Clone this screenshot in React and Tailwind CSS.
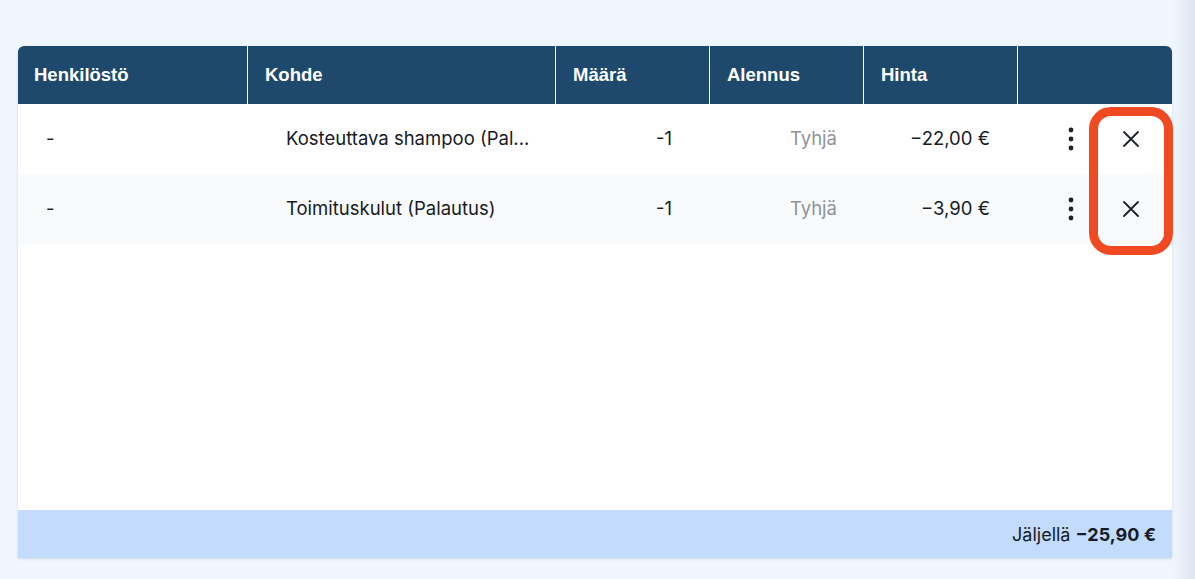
import React from "react";

const cols = "grid-cols-[230px_308px_154px_154px_154px_154px]";

function Dots() {
  return (
    <svg width="6" height="24" viewBox="0 0 6 24" className="block">
      <circle cx="3" cy="3" r="2.4" fill="#1a202c" />
      <circle cx="3" cy="12" r="2.4" fill="#1a202c" />
      <circle cx="3" cy="21" r="2.4" fill="#1a202c" />
    </svg>
  );
}

function XIcon() {
  return (
    <svg width="18" height="18" viewBox="0 0 18 18" className="block">
      <path d="M2 2 L16 16 M16 2 L2 16" stroke="#1a202c" strokeWidth="1.8" strokeLinecap="round" />
    </svg>
  );
}

function Row({ name, item, qty, price, alt }) {
  return (
    <div
      className={`grid ${cols} items-center h-[70px] text-[18.5px] text-[#161b26] ${alt ? "bg-[#f8fafc]" : "bg-white"}`}
      style={{ fontFamily: "Inter, 'Noto Sans', sans-serif" }}
    >
      <div className="pl-[28px]">{name}</div>
      <div className="pl-[38px] whitespace-nowrap overflow-hidden">{item}</div>
      <div className="text-right pr-[38px]">{qty}</div>
      <div className="text-right pr-[27px] text-[#8e9299]">Tyhjä</div>
      <div className="text-right pr-[28px]">{price}</div>
      <div className="flex items-center h-full">
        <div className="ml-[50px] w-[6px] flex justify-center"><Dots /></div>
        <div className="ml-[48px] w-[18px] flex justify-center"><XIcon /></div>
      </div>
    </div>
  );
}

export default function App() {
  return (
    <div className="relative w-[1195px] h-[579px] bg-[#eff6fe] overflow-hidden">
      <div className="absolute right-0 top-0 h-full w-[22px] bg-gradient-to-r from-[#eff6fe] to-[#dee5ee]" />
      <div className="pt-[46px] pl-[18px]">
        <div className="relative w-[1154px] h-[512px] bg-white rounded-t-[6px] shadow-[0_1px_3px_rgba(0,0,0,0.12)] flex flex-col">
          <div
            className={`grid ${cols} h-[58px] bg-[#1e496c] rounded-t-[6px] text-white font-bold text-[18.5px]`}
            style={{ fontFamily: "'Liberation Sans', Arial, sans-serif" }}
          >
            <div className="flex items-center pl-[16px] border-r border-white">Henkilöstö</div>
            <div className="flex items-center pl-[17px] border-r border-white">Kohde</div>
            <div className="flex items-center pl-[17px] border-r border-white">Määrä</div>
            <div className="flex items-center pl-[17px] border-r border-white">Alennus</div>
            <div className="flex items-center pl-[17px] border-r border-white">Hinta</div>
            <div />
          </div>
          <Row name="-" item="Kosteuttava shampoo (Pal..." qty="-1" price="−22,00 €" />
          <Row name="-" item="Toimituskulut (Palautus)" qty="-1" price="−3,90 €" alt />
          <div className="flex-1" />
          <div
            className="h-[48px] bg-[#c3dbfc] flex items-center justify-end pr-[16px] text-[18px] text-[#161b26]"
            style={{ fontFamily: "Inter, 'Noto Sans', sans-serif" }}
          >
            <span>Jäljellä&nbsp;</span>
            <span className="font-bold">−25,90 €</span>
          </div>
          <div className="absolute left-[1071px] top-[61px] w-[84px] h-[148px] border-[9px] border-[#ef4a22] rounded-[22px]" />
        </div>
      </div>
    </div>
  );
}
